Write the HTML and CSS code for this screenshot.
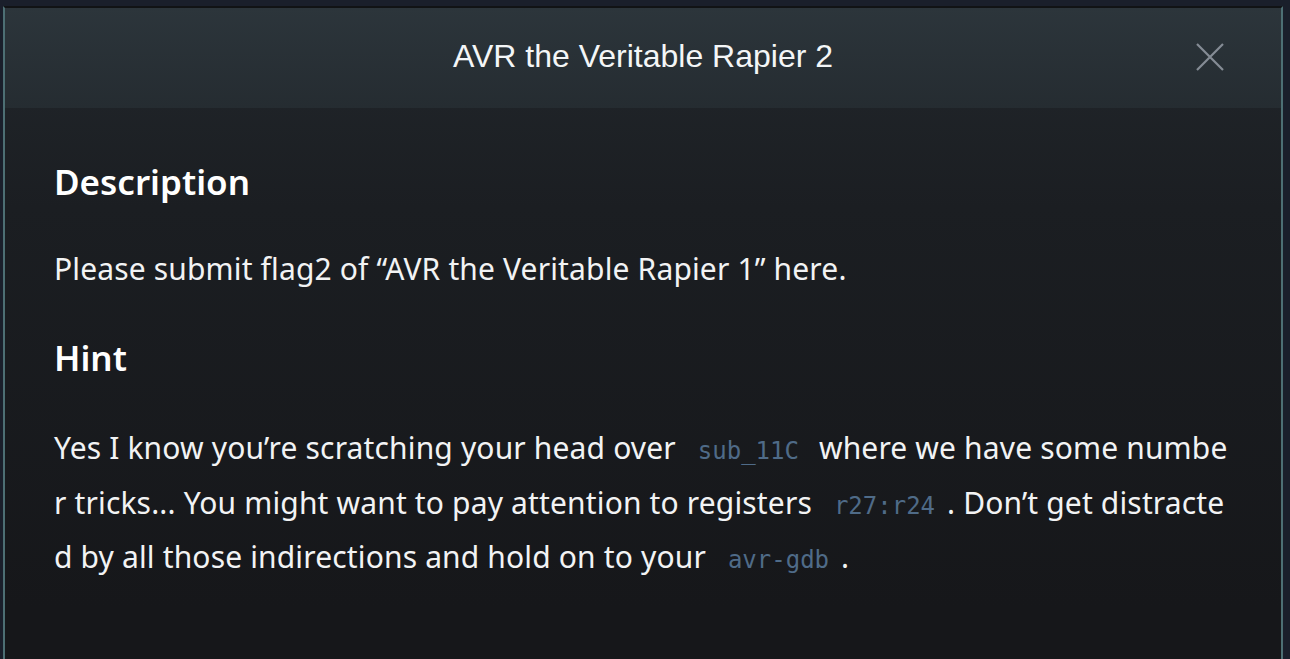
FILE: index.html
```html
<!DOCTYPE html>
<html lang="en">
<head>
<meta charset="utf-8">
<title>AVR the Veritable Rapier 2</title>
<link rel="stylesheet" href="styles.css">
</head>
<body>
<div class="page">
  <div class="backdrop-edge"></div>
  <div class="modal">
    <div class="modal-header">
      <h1 class="modal-title">AVR the Veritable Rapier 2</h1>
      <button class="close-btn" aria-label="Close">
        <svg width="30" height="30" viewBox="0 0 30 30"><path d="M2 2 L28 28 M28 2 L2 28" stroke="#858c95" stroke-width="2.2" fill="none"/></svg>
      </button>
    </div>
    <div class="modal-body">
      <h2 class="section-title">Description</h2>
      <p class="section-text">Please submit flag2 of “AVR the Veritable Rapier 1” here.</p>
      <h2 class="section-title">Hint</h2>
      <p class="section-text hint">Yes I know you’re scratching your head over <code class="code">sub_11C</code> where we have some number tricks... You might want to pay attention to registers <code class="code">r27:r24</code>. Don’t get distracted by all those indirections and hold on to your <code class="code">avr-gdb</code>.</p>
    </div>
  </div>
</div>
</body>
</html>
```

FILE: styles.css
```css
html, body {
  margin: 0;
  padding: 0;
  height: 100%;
  overflow: hidden;
  background: #1a1f2b;
}

.page {
  display: flex;
  height: 659px;
  padding-top: 6px;
  box-sizing: border-box;
}

.backdrop-edge {
  width: 3px;
  flex: none;
}

.modal {
  width: 1280px;
  flex: none;
  box-sizing: border-box;
  border-top: 2px solid #111315;
  border-left: 2px solid #4d6f74;
  border-right: 2px solid #4d6f74;
  background: linear-gradient(180deg, #22272c 0px, #1b1e22 200px, #16171a 600px);
  display: flex;
  flex-direction: column;
}

.modal-header {
  height: 100px;
  flex: none;
  background: linear-gradient(180deg, #2c353b 0%, #252c31 100%);
  display: flex;
  align-items: center;
  justify-content: center;
  position: relative;
}

.modal-title {
  margin: 0;
  font-family: "Liberation Sans", Arial, sans-serif;
  font-weight: 400;
  font-size: 32px;
  color: #f4f6f7;
  line-height: 1;
  padding-bottom: 4px;
}

.close-btn {
  position: absolute;
  right: 56px;
  top: 34px;
  width: 30px;
  height: 30px;
  padding: 0;
  border: 0;
  background: none;
  display: flex;
}

.modal-body {
  padding: 52px 51px 0 49px;
  font-family: "Noto Sans", "Open Sans", sans-serif;
  color: #f2f3f4;
}

.section-title {
  margin: 0 0 38px;
  font-size: 35px;
  font-weight: 600;
  line-height: 44px;
  color: #ffffff;
}

.section-text {
  margin: 0 0 40px;
  font-size: 30px;
  letter-spacing: 0.15px;
  line-height: 54px;
}

.hint {
  word-break: break-all;
  padding-top: 3px;
  line-height: 54.5px;
}

.code {
  font-family: "DejaVu Sans Mono", "Liberation Mono", monospace;
  font-size: 24px;
  line-height: 1;
  letter-spacing: 0;
  color: #4f6b88;
  padding: 0 12px 0 14px;
}
```
